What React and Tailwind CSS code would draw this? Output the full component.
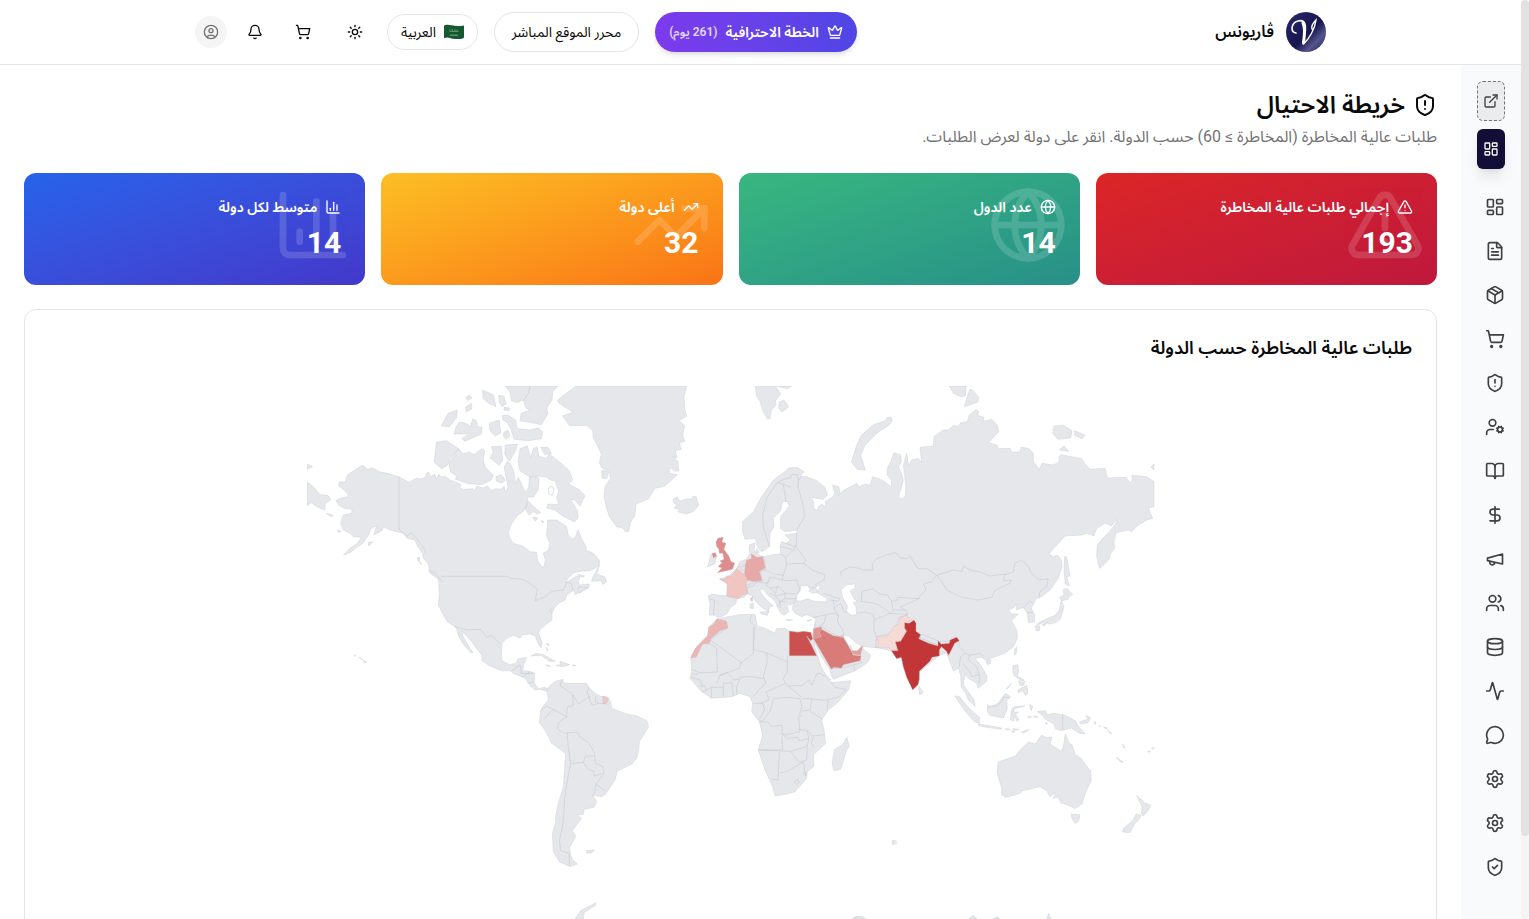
import {
  Activity,
  Bell,
  BookOpen,
  ChartColumn,
  CircleUser,
  Crown,
  Database,
  DollarSign,
  ExternalLink,
  FileText,
  Globe,
  LayoutDashboard,
  MessageCircle,
  Package,
  Settings,
  ShieldAlert,
  ShieldCheck,
  ShoppingCart,
  Sun,
  TrendingUp,
  TriangleAlert,
  UserCog,
  Users,
} from "lucide-react";

const NAV_ITEMS = [
  { label: "لوحة التحكم", icon: LayoutDashboard },
  { label: "الصفحات", icon: FileText },
  { label: "المنتجات", icon: Package },
  { label: "الطلبات", icon: ShoppingCart },
  { label: "الاحتيال", icon: ShieldAlert },
  { label: "الموظفون", icon: UserCog },
  { label: "المدونة", icon: BookOpen },
  { label: "المالية", icon: DollarSign },
  { label: "التسويق", icon: MegaphoneIcon },
  { label: "العملاء", icon: Users },
  { label: "البيانات", icon: Database },
  { label: "النشاط", icon: Activity },
  { label: "الرسائل", icon: MessageCircle },
  { label: "الإعدادات", icon: Settings },
  { label: "إعدادات المتجر", icon: Settings },
  { label: "الأمان", icon: ShieldCheck },
];

const STATS = [
  {
    label: "إجمالي طلبات عالية المخاطرة",
    value: 193,
    icon: TriangleAlert,
    color: "from-[#dc2626] to-[#be183c]",
  },
  {
    label: "عدد الدول",
    value: 14,
    icon: Globe,
    color: "from-[#38b77f] to-[#289088]",
  },
  {
    label: "أعلى دولة",
    value: 32,
    icon: TrendingUp,
    color: "from-[#fbbf24] to-[#f97316]",
  },
  {
    label: "متوسط لكل دولة",
    value: 14,
    icon: ChartColumn,
    color: "from-[#2563eb] to-[#4338ca]",
  },
];

// Each region is drawn on its own grid, three units to one map pixel.
const REGIONS = [
  {
    name: "north-america",
    transform: "translate(-6 -6) scale(0.33333)",
    land: [
      "M188 256L203 268L218 264L238 275L262 280L297 291L328 307L348 295L362 297L374 293L380 280L386 277L392 290L404 282L410 298L416 282L424 292L433 288L452 301L466 306L482 313L480 324L490 328L520 326L524 332L530 318L550 324L562 318L575 331L588 326L602 328L612 318L616 336L624 322L618 290L612 262L622 244L632 252L642 278L645 310L655 292L668 320L676 338L686 322L688 292L712 290L718 298L714 330L700 352L684 350L680 378L668 396L650 408L634 432L625 456L628 470L640 490L668 498L690 515L710 517L712 540L724 560L732 560L736 540L730 520L745 510L750 490L740 470L743 420L770 420L785 430L800 440L804 465L818 478L826 472L834 450L846 478L858 500L858 510L880 520L898 540L898 556L885 565L868 572L840 574L822 578L806 592L795 610L830 588L840 590L835 605L838 615L868 612L866 622L838 638L825 643L822 630L800 645L796 660L778 668L762 685L756 700L756 720L740 732L720 748L716 758L726 790L724 803L716 795L706 768L690 762L668 764L660 774L640 766L620 775L606 790L604 822L606 842L628 854L648 850L655 836L680 832L672 852L668 872L690 874L704 880L702 908L715 926L735 922L750 930L745 936L720 928L705 930L686 912L676 895L660 888L640 880L630 872L605 872L570 858L546 842L546 826L522 794L500 768L484 752L490 770L504 796L519 818L512 818L494 798L478 775L470 748L465 740L442 725L430 705L415 675L418 640L416 605L412 590L390 575L385 552L370 535L368 520L352 498L345 480L322 475L310 460L290 455L270 450L250 440L246 452L222 464L230 438L214 445L205 465L188 490L170 502L150 518L130 526L150 505L172 490L184 472L160 470L150 460L130 450L122 430L130 405L155 400L156 388L135 385L118 378L108 362L120 355L140 350L146 345L130 328L116 318L118 306L136 306L142 285L165 270Z",
      "M410 186L440 182L476 206L450 236L440 258L424 266L402 246Z",
      "M476 206L490 222L508 216L522 224L545 206L554 212L550 240L556 262L580 286L574 300L545 314L500 310L466 298L470 288L452 276L446 250Z",
      "M574 200L604 198L608 240L598 256L570 234L580 216Z",
      "M616 196L652 192L648 210L628 244L614 222Z",
      "M588 290L604 284L616 300L606 310L588 302Z",
      "M660 206L682 198L692 232L700 206L712 200L716 228L738 236L748 222L786 252L808 272L818 300L806 312L836 328L855 348L840 378L822 358L812 360L832 392L834 414L824 426L788 408L764 390L740 384L744 372L776 374L770 352L776 334L766 304L748 298L740 292L716 288L688 290L660 272L654 246Z",
      "M722 202L744 202L754 220L734 224Z",
      "M684 364L722 398L712 402L700 394L688 406L676 388Z",
      "M698 412L714 414L706 424Z",
      "M724 422L732 424L728 430Z",
      "M472 90L470 112L448 140L424 138L444 100Z",
      "M496 82L514 70L516 86L500 96Z",
      "M498 52L508 46L516 54L502 62Z",
      "M547 30L580 44L588 80L564 68L550 56Z",
      "M596 46L612 48L618 72L606 80L598 66Z",
      "M612 82L628 84L628 92L612 90Z",
      "M478 126L498 130L512 140L518 116L530 124L532 140L546 142L544 162L512 176L494 184L486 176L506 162L462 162L468 142Z",
      "M568 130L598 120L602 160L586 168L570 152Z",
      "M612 156L624 150L630 168L618 178L610 168Z",
      "M608 106L624 106L646 120L652 146L690 150L716 144L728 156L724 176L686 182L642 178L634 150L620 126L608 120Z",
      "M616 18L774 18L758 34L756 60L740 84L744 100L724 134L684 126L660 122L664 100L690 90L678 84L670 60L650 68L634 62L630 36Z",
      "M22 252L38 260L22 268Z",
      "M22 306L44 324L60 344L84 346L92 360L76 370L74 390L50 380L34 368L22 378Z",
      "M80 400L100 406L94 410Z",
      "M112 450L124 454L116 458Z",
      "M206 486L218 486L206 498Z",
      "M352 532L360 534L358 544L366 554L354 544Z",
      "M386 570L404 576L428 606L412 594L390 580Z",
      "M898 556L890 582L914 590L920 604L910 614L902 602L874 604L880 588Z",
      "M832 582L854 588L846 592Z",
      "M834 622L866 622L838 640Z",
      "M692 828L708 820L730 824L766 844L748 844L724 826Z",
      "M738 854L752 858L742 859Z",
      "M780 844L810 854L786 860L768 856L782 854Z",
      "M818 854L828 857L818 858Z",
      "M738 791L748 792L746 798Z",
      "M738 802L744 810L742 814Z",
      "M164 824L168 828L164 829Z",
      "M176 831L188 838L184 838Z",
      "M190 840L200 846L194 850Z",
    ],
    borders: [
      "M746 324L756 318L762 330L756 346L746 342Z",
      "M297 291L297 448L322 468L334 458L352 478L376 512L376 520",
      "M424 589L620 589L636 596L668 598L690 610L712 628L706 662L736 650L756 634L790 630L802 606L814 610L818 630",
      "M465 740L502 750L542 748L560 772L576 766L604 796",
      "M636 872L652 860L662 856L664 880M664 880L700 880M668 892L690 876M686 910L700 906M756 685L750 690L756 700",
      "M690 18L686 38L672 60",
    ],
  },
  {
    name: "greenland-eurasia",
    transform: "translate(234 -6) scale(0.33333)",
    land: [
      "M108 18L53 60L56 68L80 85L100 97L68 107L88 137L140 136L158 152L160 175L168 188L184 222L178 248L186 264L208 275L212 295L195 320L192 350L200 385L208 410L230 440L248 444L256 455L266 454L272 425L284 408L288 373L325 356L345 325L375 318L412 284L386 280L392 262L404 274L416 272L414 244L398 230L412 234L406 212L424 208L418 188L434 184L428 164L434 138L418 122L440 108L434 90L432 50L440 18Z",
      "M186 270L206 276L200 296L186 294Z",
      "M400 356L412 352L420 364L440 356L456 358L458 350L468 350L476 376L460 394L440 402L414 396L418 388L402 384L412 376L400 368Z",
      "M646 18L706 18L722 42L706 62L708 74L694 90L690 116L682 116L670 96L660 64L650 48Z",
      "M708 18L756 18L740 26Z",
      "M718 66L732 60L746 80L726 96L716 84Z",
      "M770 262L792 275L780 288L800 290L830 302L855 322L862 345L850 358L808 352L820 362L822 385L832 392L835 380L845 372L858 382L855 365L880 350L884 340L878 316L896 320L900 335L895 346L912 330L950 310L958 320L975 312L990 316L998 290L1020 297L1040 310L1055 322L1054 300L1042 285L1042 265L1052 245L1062 218L1082 224L1084 246L1076 260L1084 280L1090 300L1076 350L1084 358L1096 348L1098 320L1094 285L1090 256L1100 220L1106 258L1115 240L1135 235L1145 248L1140 202L1180 198L1182 170L1210 150L1225 150L1240 136L1255 140L1262 128L1282 125L1288 105L1308 88L1316 95L1312 106L1332 112L1330 124L1355 118L1372 135L1376 155L1345 188L1370 195L1376 206L1410 205L1415 216L1440 216L1443 202L1465 205L1480 220L1480 245L1498 268L1506 250L1540 255L1558 245L1556 234L1562 224L1625 236L1635 252L1650 268L1695 265L1702 294L1758 292L1770 308L1778 300L1775 286L1820 290L1842 305L1842 380L1825 384L1838 415L1820 420L1795 435L1775 455L1765 450L1728 458L1722 485L1724 505L1712 520L1706 540L1690 555L1679 566L1670 530L1672 495L1685 478L1708 455L1728 430L1730 418L1715 437L1695 430L1670 445L1662 468L1640 460L1625 465L1575 468L1550 495L1527 522L1540 530L1552 526L1565 540L1566 560L1555 595L1530 630L1505 650L1490 655L1480 672L1474 685L1484 705L1483 725L1465 728L1462 700L1450 682L1430 690L1430 672L1420 684L1405 690L1415 702L1435 702L1414 722L1430 750L1432 775L1420 800L1395 820L1350 835L1340 843L1325 832L1305 835L1318 850L1340 885L1340 903L1315 925L1310 910L1285 895L1275 882L1270 915L1285 935L1302 960L1305 978L1285 960L1278 940L1264 922L1262 885L1255 865L1240 872L1230 845L1220 820L1198 825L1170 850L1138 875L1135 910L1118 928L1100 890L1090 860L1084 832L1070 835L1055 812L1010 803L975 800L950 790L925 768L912 765L912 775L925 795L933 808L930 794L942 818L950 816L968 795L970 808L992 825L985 845L965 860L945 872L880 898L873 885L870 870L845 830L822 785L816 772L822 745L828 715L800 704L785 710L765 700L756 685L762 668L752 675L740 672L746 695L732 706L722 700L712 680L705 662L690 650L678 640L672 628L660 628L662 638L680 660L700 678L688 682L686 696L678 690L665 682L648 665L635 645L622 642L612 652L590 655L588 670L570 685L562 700L545 710L532 712L525 706L508 705L510 670L504 648L515 643L560 648L562 610L540 598L560 590L570 585L590 565L600 545L618 538L628 525L628 495L645 488L642 510L655 525L672 530L700 524L722 522L720 500L725 485L738 490L750 480L735 465L770 460L772 450L735 455L722 445L722 410L748 378L742 365L728 364L722 392L700 415L702 440L690 460L688 500L665 515L655 505L645 475L615 478L608 455L608 425L640 395L665 350L700 300L735 275L745 264Z",
      "M512 524L526 518L530 528L524 552L502 560L508 544Z",
      "M660 697L686 694L682 706L664 702Z",
      "M630 672L640 670L640 686L630 684Z",
      "M738 718L758 720L744 722Z",
      "M800 722L816 718L806 724Z",
      "M650 506L658 516L650 520Z",
      "M1054 112L1057 122L1046 136L1010 160L975 196L962 226L976 270L952 268L934 246L950 196L964 166L1000 134L1036 122L1042 112Z",
      "M1228 18L1278 18L1276 48L1262 50L1240 40Z",
      "M1290 28L1300 32L1316 52L1314 66L1273 80L1280 56Z",
      "M1542 138L1570 136L1596 152L1592 174L1554 178L1538 160Z",
      "M1604 152L1636 166L1626 176L1604 166Z",
      "M1558 210L1572 198L1586 214Z",
      "M1832 262L1842 252L1842 270Z",
      "M1574 530L1580 530L1590 588L1580 590L1588 618L1576 612L1572 570Z",
      "M1570 628L1582 626L1598 644L1586 650L1584 658L1566 662L1558 652L1572 644Z",
      "M1564 660L1572 680L1562 716L1546 728L1528 732L1514 726L1490 736L1496 728L1530 712L1546 706L1558 690Z",
      "M1486 738L1500 738L1498 752L1488 752Z",
      "M1506 734L1520 728L1514 738Z",
      "M1422 812L1430 800L1430 818L1424 826Z",
      "M1338 846L1352 838L1352 850L1342 854Z",
    ],
    borders: [
      // Nordics and Baltics
      "M688 500L670 440L668 405L682 350L712 308L730 312L738 365M712 308L722 302L752 292L756 284L772 284L776 300L786 290M730 312L752 322M776 300L774 320L788 370L794 410L770 450M770 460L768 500L738 490M768 500L754 508L722 500M722 522L736 532L754 516L768 506",
      // central and eastern Europe
      "M672 530L676 570L662 574L666 604L640 604L616 590L616 560L620 540M736 532L740 552L730 586L700 582L676 570M768 500L798 540L790 550L740 552M790 550L820 572L855 584L852 600L826 614L836 622L812 624L800 616L782 632M730 586L726 600L748 602L770 600L780 630L768 642L736 640L716 620L690 624L678 614L690 592L712 596L726 600M622 642L620 615L650 606L684 610L690 592M650 606L640 618L622 622M712 620L706 640L690 624M690 640L710 648L736 640L734 656L720 664L706 650M734 656L768 656L776 642M720 664L720 684M712 680L720 664L736 664M600 565L614 574L628 600M592 562L618 556",
      "M508 658L524 660L520 706M560 648L590 655M758 670L768 660",
      // Caucasus and Middle East
      "M850 640L880 650L900 656L896 664L870 660M880 660L884 690L896 706M884 682L902 670L912 694M858 704L820 712L828 715M858 704L884 700L896 706L892 724L908 750L912 765M858 704L852 730L828 745M828 745L826 728M848 740L880 762L912 775M874 866L906 864L940 855L965 848L960 835M940 855L945 872",
      // Kazakhstan, Mongolia and China
      "M904 590L902 576L930 560L960 566L968 570L1000 570L996 552L1008 538L1040 524L1068 518L1082 534L1100 536L1110 528L1134 566L1160 566L1190 586L1220 576L1238 570L1266 574L1270 558L1290 570L1320 576L1350 588L1380 584L1400 582L1420 576L1425 550L1445 540L1465 560L1474 580L1498 600L1524 596L1520 620L1500 635L1496 655",
      "M1190 586L1206 606L1220 630L1260 650L1312 660L1356 652L1364 632L1410 610L1414 600L1390 602L1396 582",
      "M1190 586L1172 606L1150 612L1158 630L1138 650L1136 656L1080 682L1095 690L1104 702",
      "M964 664L966 634L1000 626L1018 642L1042 644L1054 664L1070 662L1074 652L1136 656M1054 664L1060 690L1050 702L1040 690L1006 670L964 664M1060 690L1100 690M950 700L976 696L1000 704L1002 720L1050 700L1104 704M1002 720L1002 750L1010 770L1006 803M1010 770L1046 762L1066 740L1078 712L1104 704",
      "M912 694L936 704L950 700",
      "M1138 758L1142 770L1138 782L1195 795L1142 775M1138 765L1150 764L1198 785L1235 782L1250 770M1195 795L1200 828M1255 775L1258 800L1276 820L1262 830L1258 860M1276 820L1290 826L1320 820L1330 828M1290 826L1284 840L1298 850L1310 860L1318 884L1296 890L1290 876L1268 850M1318 884L1318 910",
      "M1450 682L1470 664L1480 672M1462 700L1480 696",
    ],
  },
  {
    name: "south-america-africa",
    transform: "translate(214 214) scale(0.33333)",
    land: [
      "M85 262L100 248L110 243L128 238L132 250L165 250L200 250L206 262L225 280L240 288L262 290L272 306L275 325L320 342L350 348L380 362L386 380L358 425L356 450L350 475L335 492L292 513L285 540L255 585L245 590L218 585L230 605L222 622L192 628L190 643L172 645L184 655L170 675L156 692L168 708L148 745L152 765L158 780L172 792L150 800L118 785L100 755L97 700L108 665L106 655L115 610L130 560L137 460L95 430L75 390L58 368L62 330L70 318L85 300L82 275Z",
      "M590 57L625 50L660 44L705 43L708 60L712 78L735 85L765 100L770 85L795 85L808 93L850 97L875 97L880 118L884 140L895 175L905 205L925 235L935 248L992 242L985 270L955 305L925 330L905 360L912 390L917 430L880 465L882 498L862 515L860 535L825 575L800 582L765 588L758 560L735 510L715 450L728 405L718 365L695 335L698 310L690 290L660 280L635 290L575 295L545 275L510 235L516 215L512 175L530 140L562 108L567 80Z",
      "M980 412L988 438L980 450L962 508L942 512L936 488L944 448L968 434Z",
      "M200 752L224 750L216 758L200 760Z",
      "M165 957L182 932L228 908L226 916L192 938L190 957Z",
      "M998 957L1006 950L1026 950L1034 957Z",
    ],
    borders: [
      "M125 240L120 258L132 264L158 284L160 318L142 320L140 350L116 368L112 386L130 400L172 396L180 412L206 428L224 460L226 490L248 500L252 520L228 552L222 585M158 284L176 312L210 288M206 262L202 280L216 316L236 310L262 312M228 288L226 306L236 310M248 288L250 310M62 330L80 318L98 328L72 358M98 328L140 350M142 400L144 432L152 490L190 488L196 468L222 468M152 490L146 520L136 580L128 680L118 720L122 752L148 760M190 488L206 508L222 514L222 528L248 520M228 552L256 574M148 762L148 798",
      // North and West Africa
      "M622 83L570 120L662 186L662 190L700 160L700 148L705 80L690 64L694 44M700 82L700 148L748 162L802 186L802 167M548 130L570 132L590 145L592 216L552 218L540 218L514 208M662 186L660 204L600 226L592 246L590 252M600 226L622 218L642 240L660 236M740 160L742 186L730 230L738 250L722 264L700 290M802 186L802 215L790 236L796 250L738 276M660 232L690 230L730 236M660 236L650 260L650 284M610 250L636 248L640 290M610 250L610 290M574 262L608 262M540 260L552 255L560 270L574 262M548 262L540 240L512 232M514 222L534 222M574 262L574 294M560 270L546 276",
      // Central, East and Southern Africa
      "M698 310L728 310L734 330L718 358M722 310L748 300L738 276M760 296L800 292L840 296L846 320L836 350L840 395L796 405L786 402L786 376L752 380L746 366L718 366M760 296L752 330L732 358L718 366M796 250L826 276L848 296L870 296L900 300L924 300L958 290L978 268L946 262L932 246M802 258L848 256L866 240L876 256L890 222L900 220L934 240M876 296L870 330L846 334M870 334L908 358M924 300L922 330M840 345L846 350M836 388L862 392L878 408L914 404M862 392L866 416L838 422L832 412L802 416L786 402M786 410L788 450L716 450L772 452L812 454L846 444L862 438L866 416M880 412L874 430L882 442M812 454L838 486L860 480L862 438M778 456L774 540L752 536M778 520L802 514L850 486L856 520M852 516L858 520L856 528L850 522ZM822 546L832 538L838 546L830 554Z",
    ],
  },
  {
    name: "oceania",
    transform: "translate(534 214) scale(0.33333)",
    land: [
      "M604 406L618 412L636 412L630 432L664 454L670 440L676 402L688 430L696 434L706 464L722 474L738 496L752 512L754 542L738 574L726 612L704 626L690 618L662 608L655 592L640 594L646 576L630 590L620 572L600 560L548 572L540 580L500 592L484 584L486 568L472 520L474 486L526 468L544 446L566 426L586 432Z",
      "M694 642L720 644L716 662L706 670L696 656Z",
      "M890 586L914 608L932 616L926 630L910 648L904 644L906 620Z",
      "M888 642L902 646L898 658L884 672L870 698L848 696L850 686L880 660Z",
      "M344 288L358 290L384 322L418 352L418 370L404 366L376 334Z",
      "M414 372L440 376L486 384L484 388L440 382L418 378Z",
      "M496 386L512 388L500 390ZM518 386L538 388L520 392ZM544 396L568 388L552 400ZM514 394L524 396L518 398Z",
      "M442 314L452 320L474 310L496 280L512 290L500 302L502 326L490 354L450 346L442 334Z",
      "M514 328L522 320L554 318L524 326L520 336L536 336L526 342L536 358L532 364L522 348L522 364L512 360Z",
      "M570 314L578 318L574 332L570 322Z",
      "M562 350L576 350L566 353ZM580 348L594 352L582 351Z",
      "M592 334L616 332L622 344L640 340L676 346L708 364L714 378L736 402L718 400L694 384L664 392L646 386L642 372L616 358L608 348Z",
      "M718 366L744 358L738 346L752 354L744 368L722 372Z",
      "M762 364L768 368L766 374ZM776 376L782 378L780 380ZM790 380L802 384L800 388ZM802 390L816 402L808 398Z",
      "M618 366L622 370L618 374Z",
      "M520 196L534 194L536 212L532 230L548 236L556 246L540 240L522 226L518 212Z",
      "M536 242L554 250L548 258L538 254Z",
      "M534 270L560 256L564 280L556 286L548 272L534 278Z",
      "M498 268L516 248L504 264Z",
      "M236 258L248 274L246 282L238 284Z",
      "M848 432L856 444L850 442Z",
      "M828 472L850 486L844 488Z",
      "M922 454L932 452L928 458ZM934 446L942 442L940 448Z",
      "M156 722L168 722L170 730L158 734Z",
      "M36 957L48 950L66 950L78 957Z",
      "M386 957L398 946L412 957ZM458 957L472 950L480 957ZM620 957L626 940L632 957Z",
    ],
    borders: ["M668 344L668 390M444 322L456 318L468 320L484 306L490 292L510 292"],
  },
];

const FLAGGED = [
  {
    code: "PK",
    color: "#f5dad6",
    transform: "translate(534 214) scale(0.33333)",
    path: "M180 52L200 46L216 60L194 68L194 84L200 94L182 124L166 126L174 152L154 152L146 142L108 142L116 128L110 112L144 106L162 80L178 70Z",
  },
  {
    code: "IN",
    color: "#c23638",
    transform: "translate(534 214) scale(0.33333)",
    path: "M194 68L208 70L222 60L228 70L228 94L242 104L236 116L266 130L294 138L294 122L304 132L328 130L330 120L350 112L358 122L344 130L334 150L326 166L318 152L304 140L298 150L298 168L276 172L270 184L238 214L238 238L234 254L218 270L200 232L190 200L184 172L170 176L154 152L174 152L166 126L182 124L200 94L194 84Z",
  },
  {
    code: "EG",
    color: "#cb5150",
    transform: "translate(214 214) scale(0.33333)",
    path: "M808 93L832 97L850 94L872 97L878 116L872 122L860 108L876 138L890 167L808 167Z",
  },
  {
    code: "SA",
    color: "#d97b79",
    transform: "translate(214 214) scale(0.33333)",
    path: "M880 115L904 110L898 98L903 87L940 107L970 112L984 136L1000 165L1023 168L1020 182L970 194L964 204L940 202L934 208L906 160Z",
  },
  {
    code: "JO",
    color: "#e29693",
    transform: "translate(214 214) scale(0.33333)",
    path: "M880 86L904 80L906 88L898 98L904 110L880 118Z",
  },
  {
    code: "AE",
    color: "#e29f9c",
    transform: "translate(214 214) scale(0.33333)",
    path: "M994 152L1012 152L1028 137L1022 166L1000 162Z",
  },
  {
    code: "KW",
    color: "#efc0bd",
    transform: "translate(214 214) scale(0.33333)",
    path: "M962 106L970 106L970 113L962 112Z",
  },
  {
    code: "MA",
    color: "#ebb5b3",
    transform: "translate(214 214) scale(0.33333)",
    path: "M590 57L606 60L620 64L624 84L600 92L572 116L568 130L548 132L528 172L512 173L524 148L550 120L564 106L566 82L582 72Z",
  },
  {
    code: "GF",
    color: "#f0c5c2",
    transform: "translate(214 214) scale(0.33333)",
    path: "M250 289L266 298L258 311L250 310Z",
  },
  {
    code: "FR",
    color: "#f0c5c2",
    transform: "translate(234 -6) scale(0.33333)",
    path: "M590 566L612 582L628 588L618 612L624 640L606 646L596 656L562 648L562 612L538 596L556 596L560 588L572 588L582 578ZM632 654L638 650L638 664L632 662Z",
  },
  {
    code: "DE",
    color: "#e7a9a7",
    transform: "translate(234 -6) scale(0.33333)",
    path: "M634 521L650 532L668 530L676 564L658 574L666 602L636 604L622 600L614 582L616 556L620 540L634 536Z",
  },
  {
    code: "GB",
    color: "#dd8d8d",
    transform: "translate(234 -6) scale(0.33333)",
    path: "M534 474L550 472L546 486L558 490L552 508L568 530L572 544L584 550L578 568L560 572L532 578L546 564L534 560L546 548L540 542L552 538L548 520L538 520L536 506L530 500L528 486ZM516 520L526 518L530 528L520 534Z",
  },
];

export default function App() {
  return (
    <div
      dir="ltr"
      className="flex h-screen overflow-hidden bg-white font-[Roboto,'Noto_Sans_Arabic','Noto_Sans','DejaVu_Sans',sans-serif] text-neutral-950"
    >
      <div dir="rtl" className="flex min-w-0 flex-1 flex-col">
        <Header />
        <div className="flex min-h-0 flex-1">
          <Sidebar />
          <main className="min-w-0 flex-1 overflow-hidden p-6">
            <h1 className="flex items-center gap-2 text-2xl font-semibold">
              <ShieldAlert size={24} />
              خريطة الاحتيال
            </h1>
            <p className="mt-1 text-base text-neutral-500">
              طلبات عالية المخاطرة (المخاطرة ≥ 60) حسب الدولة. انقر على دولة لعرض الطلبات.
            </p>

            <div className="mt-6 grid grid-cols-4 gap-4">
              {STATS.map((stat) => (
                <StatCard key={stat.label} {...stat} />
              ))}
            </div>

            <section className="mt-6 rounded-xl border border-neutral-200 p-6">
              <h2 className="mb-6 text-lg leading-7 font-semibold">طلبات عالية المخاطرة حسب الدولة</h2>
              <WorldMap />
            </section>
          </main>
        </div>
      </div>

      {/* page scroll track */}
      <div className="w-2 shrink-0 rounded-full bg-neutral-100">
        <div className="h-[91%] rounded-full bg-[#e2e2e2]" />
      </div>
    </div>
  );
}

function Header() {
  return (
    <header className="shrink-0 border-b border-neutral-200">
      <div className="mx-auto flex h-16 max-w-[1131px] items-center justify-between">
        <a href="#" className="flex items-center gap-3 text-base font-semibold">
          <Logo />
          ڤاريونس
        </a>

        <div className="flex items-center gap-4">
          <button className="flex h-10 w-[202px] items-center justify-center gap-2 rounded-full bg-gradient-to-r from-[#7c3aed] to-[#4f46e5] text-sm font-semibold text-white shadow-md">
            <Crown size={16} />
            <span>الخطة الاحترافية</span>
            <span className="text-xs opacity-80">(261 يوم)</span>
          </button>
          <button className="h-10 w-[145px] rounded-full border border-neutral-200 text-sm">
            محرر الموقع المباشر
          </button>
          <button className="flex h-9 w-[91px] items-center justify-center gap-2 rounded-full border border-neutral-200 text-sm">
            <SaudiFlag />
            العربية
          </button>
          <button aria-label="المظهر" className="flex size-8 items-center justify-center">
            <Sun size={16} />
          </button>
          <button aria-label="السلة" className="flex size-10 items-center justify-center">
            <ShoppingCart size={16} />
          </button>
          <button aria-label="الإشعارات" className="flex size-6 items-center justify-center">
            <Bell size={16} />
          </button>
          <button
            aria-label="الحساب"
            className="flex size-8 items-center justify-center rounded-full bg-neutral-100 text-neutral-500"
          >
            <CircleUser size={16} />
          </button>
        </div>
      </div>
    </header>
  );
}

function Sidebar() {
  return (
    <aside className="w-[60px] shrink-0 bg-[#f9fafc] p-4 text-neutral-700">
      <a
        href="#"
        aria-label="زيارة المتجر"
        className="flex h-10 items-center justify-center rounded-md border border-dashed border-neutral-500 bg-[#ebecee]"
      >
        <ExternalLink size={16} />
      </a>
      <a
        href="#"
        aria-label="الرئيسية"
        className="mt-2 flex h-10 items-center justify-center rounded-md bg-[#110e37] text-white shadow-lg"
      >
        <LayoutDashboard size={16} />
      </a>
      <nav className="mt-4">
        {NAV_ITEMS.map(({ label, icon: Icon }) => (
          <a key={label} href="#" aria-label={label} className="flex h-11 items-center">
            <Icon size={20} />
          </a>
        ))}
      </nav>
    </aside>
  );
}

function StatCard({ label, value, icon: Icon, color }) {
  return (
    <div className={`relative overflow-hidden rounded-xl bg-gradient-to-br p-6 text-white ${color}`}>
      <Icon size={80} className="absolute top-3 right-3 opacity-15" />
      <div className="relative flex h-5 items-center gap-2 text-sm font-semibold">
        <Icon size={16} />
        {label}
      </div>
      <div className="relative mt-2 text-3xl leading-9 font-bold">{value}</div>
    </div>
  );
}

function WorldMap() {
  return (
    <svg viewBox="0.5 0 848 580" className="h-[580px] w-full" role="img" aria-label="خريطة العالم">
      {REGIONS.map((region) => (
        <g key={region.name} transform={region.transform} strokeWidth="1.5" strokeLinejoin="round">
          <path d={region.land.join("")} fill="#e5e7eb" stroke="#cdd1d8" />
          <path d={region.borders.join("")} fill="none" stroke="#bfc4ce" />
        </g>
      ))}

      <g transform="translate(234 -6) scale(0.33333)" fill="#fff" stroke="#cdd1d8" strokeWidth="1.5">
        <path d="M782 618L802 616L812 628L806 634L820 640L834 636L826 622L840 614L838 628L828 636L862 656L860 666L822 664L802 656L780 664L770 662L770 648L780 634Z" />
        <path d="M904 630L920 614L946 612L944 626L930 632L942 656L952 664L940 668L948 680L950 704L934 706L920 696L922 676L908 654Z" />
      </g>

      {FLAGGED.map((country) => (
        <path
          key={country.code}
          d={country.path}
          transform={country.transform}
          fill={country.color}
          stroke="#c9b9bd"
          strokeWidth="1"
          className="cursor-pointer"
        />
      ))}
    </svg>
  );
}

function MegaphoneIcon({ size }) {
  return (
    <svg
      width={size}
      height={size}
      viewBox="0 0 24 24"
      fill="none"
      stroke="currentColor"
      strokeWidth="2"
      strokeLinecap="round"
      strokeLinejoin="round"
      aria-hidden="true"
    >
      <path d="m3 11 18-5v12L3 14v-3z" />
      <path d="M11.600 16.800a3 3 0 1 1-5.800-1.600" />
    </svg>
  );
}

function Logo() {
  return (
    <svg viewBox="0 0 40 40" className="size-10" aria-hidden="true">
      <defs>
        <linearGradient id="logo-bg" x1="0" y1="0" x2="1" y2="1">
          <stop offset="0" stopColor="#2b2a6b" />
          <stop offset="0.55" stopColor="#17154f" />
          <stop offset="0.75" stopColor="#56548c" />
          <stop offset="1" stopColor="#1d1b58" />
        </linearGradient>
      </defs>
      <circle cx="20" cy="20" r="20" fill="url(#logo-bg)" />
      <g fill="none" stroke="#fff" strokeLinecap="round">
        <path d="M10 21C4 20 5 11 12 9C20 7 20 14 19 22" strokeWidth="1.6" />
        <path d="M17 11C20 17 18 25 17.500 31" strokeWidth="3" />
        <path d="M17.500 32C23 27 29 17 30 8C28 10 25 14 26 17" strokeWidth="1.4" />
      </g>
    </svg>
  );
}

function SaudiFlag() {
  return (
    <svg viewBox="0 0 20 16" className="h-4 w-5" aria-hidden="true">
      <path d="M0 2Q1 0 6 1T14 2T20 1.500V13Q20 15 14 15T6 14T0 14Z" fill="#14592f" />
      <path d="M5 6h1.500M7.500 5.500h1v1.500M10 6h2M13 5.500v1.500M5.500 7.500h9" stroke="#8fb59d" strokeWidth="0.600" fill="none" />
      <path d="M6 11.200h8" stroke="#a9c9b5" strokeWidth="0.700" />
    </svg>
  );
}
